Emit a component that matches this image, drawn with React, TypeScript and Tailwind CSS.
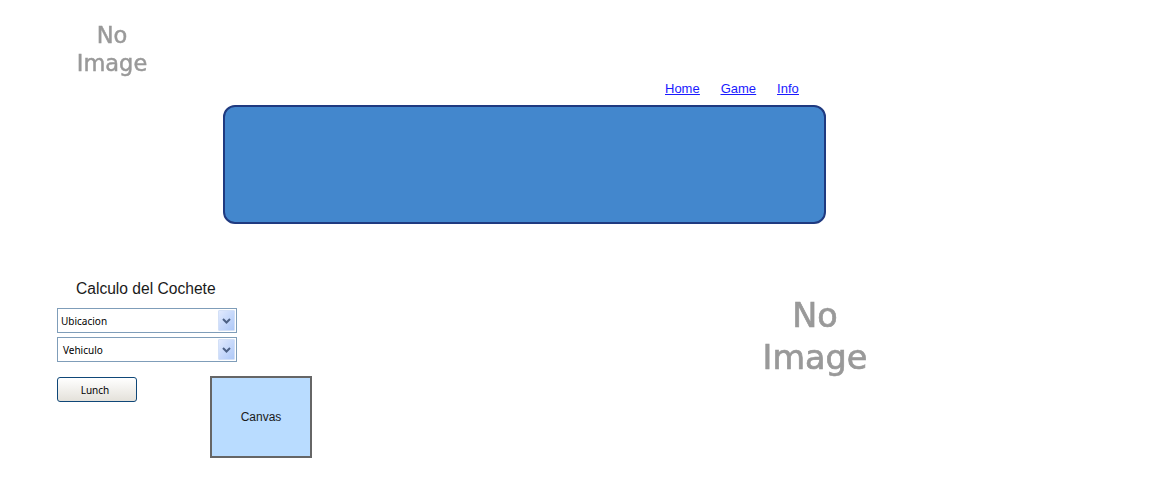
import React from "react";

function NoImage({ large }: { large?: boolean }) {
  return (
    <div
      className={
        large
          ? "w-[106px] text-center font-['DejaVu_Sans',sans-serif] text-[33.5px] leading-[42px] text-[#999999] blur-[0.7px] [-webkit-text-stroke:0.7px_#999999]"
          : "w-[72px] text-center font-['DejaVu_Sans',sans-serif] text-[22.5px] leading-[28px] text-[#999999] blur-[0.6px] [-webkit-text-stroke:0.5px_#999999]"
      }
    >
      No
      <br />
      Image
    </div>
  );
}

function Dropdown({ label, textClass }: { label: string; textClass: string }) {
  return (
    <div className="flex h-[25px] w-[180px] items-center justify-between border border-[#7f9db9] bg-white pr-[1px]">
      <span className={`pt-[2px] font-['Noto_Sans',sans-serif] text-[10px] text-black ${textClass}`}>{label}</span>
      <div className="flex h-[21px] w-[17px] items-center justify-center rounded-[1px] border border-[#d3e0f7] bg-gradient-to-br from-[#e1eafe] to-[#aec8f7]">
        <svg width="9" height="6" viewBox="0 0 9 6">
          <path d="M1 1l3.5 3.5L8 1" fill="none" stroke="#4d6185" strokeWidth="2" />
        </svg>
      </div>
    </div>
  );
}

export default function App() {
  return (
    <div className="h-[497px] w-[1150px] overflow-hidden bg-white font-['Liberation_Sans',Arial,sans-serif]">
      <div className="h-[81px] pl-[76px] pt-[21px]">
        <NoImage />
      </div>

      <nav className="flex h-[24px] items-start gap-[21px] pl-[665px] text-[13px] leading-[15px] text-[#1a1aff] underline">
        <a href="#">Home</a>
        <a href="#">Game</a>
        <a href="#">Info</a>
      </nav>

      <div className="ml-[223px] h-[119px] w-[603px] rounded-[12px] border-2 border-[#1f3a80] bg-[#4387cd]" />

      <div className="mt-[56px] flex">
        <div className="w-[705px] pl-[57px]">
          <h2 className="pl-[19px] text-[15.6px] leading-[18px] font-normal text-[#1a1a1a]">Calculo del Cochete</h2>
          <div className="mt-[10px] flex flex-col gap-[4px]">
            <Dropdown label="Ubicacion" textClass="pl-[3px]" />
            <Dropdown label="Vehiculo" textClass="pl-[5px]" />
          </div>
          <div className="flex items-start">
            <button className="mt-[15px] h-[25px] w-[80px] rounded-[3px] border border-[#0f4778] bg-gradient-to-b from-white to-[#e4e1da] pt-[1px] pr-[4px] font-['Noto_Sans',sans-serif] text-[10px] text-black">
              Lunch
            </button>
            <div className="mt-[14px] ml-[73px] flex h-[82px] w-[102px] items-center justify-center border-2 border-[#666666] bg-[#b9dcff] text-[12px] text-[#1a1a1a]">
              Canvas
            </div>
          </div>
        </div>
        <div className="ml-[57px] pt-[15px]">
          <NoImage large />
        </div>
      </div>
    </div>
  );
}
